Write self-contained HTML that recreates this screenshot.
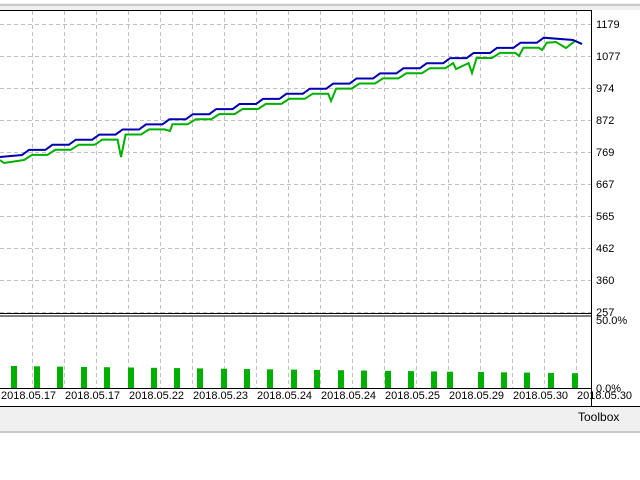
<!DOCTYPE html>
<html><head><meta charset="utf-8"><style>
body{margin:0;width:640px;height:480px;background:#fff;overflow:hidden;font-family:"Liberation Sans",sans-serif;position:relative}
.lbl{position:absolute;font-size:11px;color:#000;line-height:11px}
</style></head><body>
<div style="position:absolute;left:0;top:0;width:640px;height:10px;background:#f0f0f0;border-top:3px solid #fff;box-sizing:border-box"></div>
<div style="position:absolute;left:0;top:4px;width:640px;height:2px;background:#c8c8c8"></div>
<svg id="s" width="640" height="480" style="position:absolute;left:0;top:0" xmlns="http://www.w3.org/2000/svg">
<g id="grid" stroke="#c0c0c0" stroke-dasharray="4,3" stroke-width="1"></g>
<line x1="0" y1="10.5" x2="592" y2="10.5" stroke="#000"/>
<line x1="591.5" y1="10" x2="591.5" y2="406" stroke="#000"/>
<line x1="0" y1="313.5" x2="592" y2="313.5" stroke="#000"/>
<line x1="0" y1="316" x2="592" y2="316" stroke="#000"/>
<line x1="0" y1="388.5" x2="592" y2="388.5" stroke="#000"/>
<line x1="0" y1="406.5" x2="640" y2="406.5" stroke="#000"/>
<g id="bars" fill="#00b000"></g>
<polyline id="g" fill="none" stroke="#00b000" stroke-width="2"/>
<polyline id="b" fill="none" stroke="#0000b0" stroke-width="2"/>
</svg>
<div style="position:absolute;left:0;top:407px;width:640px;height:24px;background:#f0f0f0"></div>
<div style="position:absolute;left:0;top:431px;width:640px;height:2px;background:#c8c8c8"></div>
<div class="lbl" style="left:578px;top:412px;font-size:12px">Toolbox</div>
<div class="lbl" style="left:596px;top:20px">1179</div>
<div class="lbl" style="left:596px;top:52px">1077</div>
<div class="lbl" style="left:596px;top:84px">974</div>
<div class="lbl" style="left:596px;top:116px">872</div>
<div class="lbl" style="left:596px;top:148px">769</div>
<div class="lbl" style="left:596px;top:180px">667</div>
<div class="lbl" style="left:596px;top:212px">565</div>
<div class="lbl" style="left:596px;top:244px">462</div>
<div class="lbl" style="left:596px;top:276px">360</div>
<div class="lbl" style="left:596px;top:308px">257</div>
<div class="lbl" style="left:596px;top:316px">50.0%</div>
<div class="lbl" style="left:596px;top:384px">0.0%</div>
<div id="dates"></div>
<script>
var s='',i;
for(i=32;i<591;i+=32){s+='<line x1="'+(i+.5)+'" y1="11" x2="'+(i+.5)+'" y2="313"/><line x1="'+(i+.5)+'" y1="317" x2="'+(i+.5)+'" y2="388"/>';}
for(i=24;i<313;i+=32){s+='<line x1="0" y1="'+(i+.5)+'" x2="591" y2="'+(i+.5)+'"/>';}
document.getElementById('grid').innerHTML=s;
var bx=[14,37,60,84,107,131,154,177,200,224,247,270,294,317,341,364,388,411,434,450,481,504,527,551,575],b='';
for(i=0;i<bx.length;i++){var h=22-i*0.3;b+='<rect x="'+(bx[i]-3)+'" y="'+(388-h)+'" width="6" height="'+h+'"/>';}
document.getElementById('bars').innerHTML=b;
var bp=[],gp=[];
bp.push([0,157]);
for(i=0;i<23;i++){var x=6+i*23.4,y=155-i*5.1,ny=155-(i+1)*5.1;
bp.push([x+16,y],[x+23,ny]);
gp.push([x+18,y+5],[x+26,ny+5]);}
gp.push([0,160],[4,163]);
var dips=[[96,144],[121,157],[170,131],[331,101],[456,69],[472,73],[519,56],[542,50],[566,48]];
gp=gp.concat(dips);
gp.sort(function(a,c){return a[0]-c[0]});
gp=gp.filter(function(p){return p[0]<548});
gp.push([556,42],[566,48],[575,41],[582,44]);
bp.push([573,40],[582,44]);
function j(a){return a.map(function(p){return p[0]+','+p[1]}).join(' ')}
document.getElementById('b').setAttribute('points',j(bp));
document.getElementById('g').setAttribute('points',j(gp));
var d=['17','17','22','23','24','24','25','29','30','30'],t='';
for(i=0;i<10;i++){t+='<div class="lbl" style="left:'+(1+i*64)+'px;top:391px">2018.05.'+d[i]+'</div>';}
document.getElementById('dates').innerHTML=t;
</script>
</body></html>
